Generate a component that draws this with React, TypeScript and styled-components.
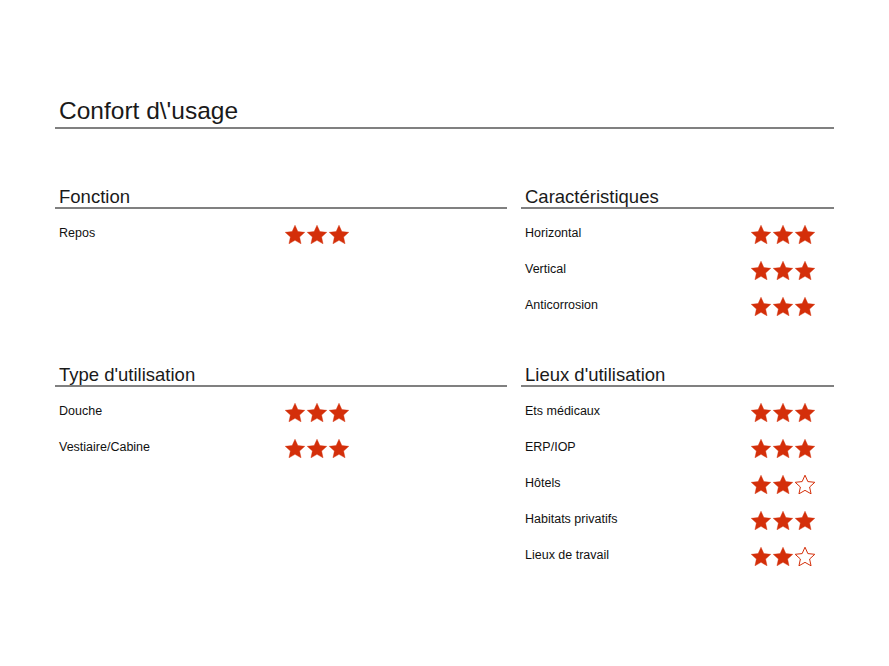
import styled, { createGlobalStyle } from "styled-components";

const GlobalStyle = createGlobalStyle`
  html, body {
    margin: 0;
    padding: 0;
    background: #ffffff;
  }
  body {
    font-family: "Liberation Sans", Arial, sans-serif;
    color: #111111;
  }
`;

const Page = styled.div`
  width: 779px;
  padding: 97px 0 60px 55px;
`;

const Title = styled.h1`
  margin: 0;
  padding: 0 0 2px 4px;
  font-size: 24.5px;
  line-height: 28px;
  font-weight: 400;
  color: #1a1a1a;
  border-bottom: 2px solid #808080;
`;

const Grid = styled.div`
  display: grid;
  grid-template-columns: 452px 313px;
  column-gap: 14px;
  row-gap: 42px;
  margin-top: 58px;
  align-items: start;
`;

const Section = styled.section`
  display: flex;
  flex-direction: column;
`;

const SectionTitle = styled.h2`
  margin: 0 0 6px;
  padding-left: 4px;
  font-size: 18.5px;
  line-height: 20px;
  font-weight: 400;
  color: #1a1a1a;
  border-bottom: 2px solid #808080;
`;

const Row = styled.div`
  display: flex;
  align-items: center;
  height: 36px;
  padding-left: 4px;
`;

const Label = styled.span`
  width: 226px;
  flex-shrink: 0;
  font-size: 12.5px;
  line-height: 15px;
  color: #111111;
`;

const Stars = styled.div`
  display: flex;
  gap: 2px;
  margin-top: 3px;
`;

const STAR_POINTS =
  "10,0.2 12.85,6.58 19.8,7.32 14.6,12 16.05,18.83 10,15.34 3.95,18.83 5.4,12 0.2,7.32 7.15,6.58";

function Star({ filled }: { filled: boolean }) {
  return (
    <svg width="20" height="19" viewBox="0 0 20 19">
      <polygon
        points={STAR_POINTS}
        fill={filled ? "#d42f0a" : "#ffffff"}
        stroke="#d42f0a"
        strokeWidth={filled ? 0.4 : 1}
        strokeLinejoin="miter"
      />
    </svg>
  );
}

function Rating({ value }: { value: number }) {
  return (
    <Stars>
      {[0, 1, 2].map((i) => (
        <Star key={i} filled={i < value} />
      ))}
    </Stars>
  );
}

type Item = [string, number];

const sections: { title: string; items: Item[] }[] = [
  { title: "Fonction", items: [["Repos", 3]] },
  {
    title: "Caractéristiques",
    items: [
      ["Horizontal", 3],
      ["Vertical", 3],
      ["Anticorrosion", 3],
    ],
  },
  {
    title: "Type d'utilisation",
    items: [
      ["Douche", 3],
      ["Vestiaire/Cabine", 3],
    ],
  },
  {
    title: "Lieux d'utilisation",
    items: [
      ["Ets médicaux", 3],
      ["ERP/IOP", 3],
      ["Hôtels", 2],
      ["Habitats privatifs", 3],
      ["Lieux de travail", 2],
    ],
  },
];

export default function App() {
  return (
    <>
      <GlobalStyle />
      <Page>
        <Title>Confort d\'usage</Title>
        <Grid>
          {sections.map((s) => (
            <Section key={s.title}>
              <SectionTitle>{s.title}</SectionTitle>
              {s.items.map(([label, value]) => (
                <Row key={label}>
                  <Label>{label}</Label>
                  <Rating value={value} />
                </Row>
              ))}
            </Section>
          ))}
        </Grid>
      </Page>
    </>
  );
}
